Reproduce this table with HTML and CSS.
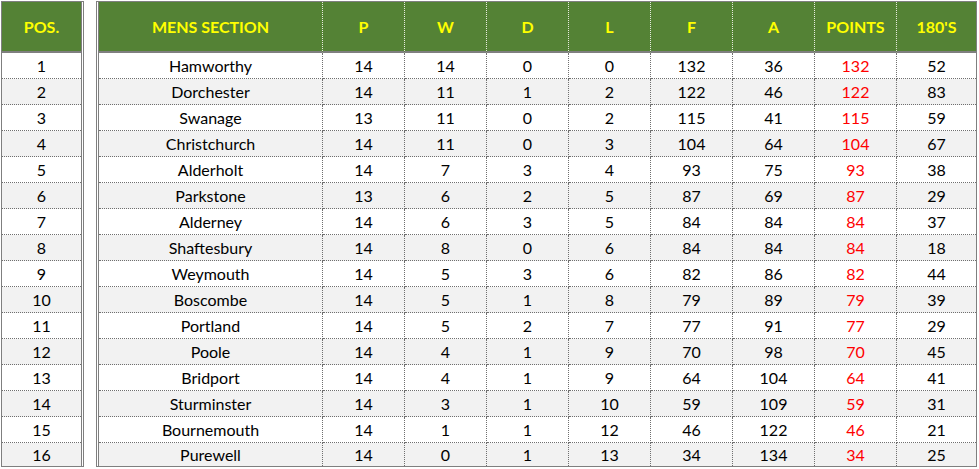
FILE: index.html
```html
<!DOCTYPE html>
<html lang="en">
<head>
<meta charset="utf-8">
<title>Mens Section League Table</title>
<link rel="stylesheet" href="styles.css">
</head>
<body>
<div class="sheet">
  <table class="tbl pos-tbl">
    <thead>
      <tr><th class="c-pos">POS.</th></tr>
    </thead>
    <tbody>
      <tr><td>1</td></tr>
      <tr><td>2</td></tr>
      <tr><td>3</td></tr>
      <tr><td>4</td></tr>
      <tr><td>5</td></tr>
      <tr><td>6</td></tr>
      <tr><td>7</td></tr>
      <tr><td>8</td></tr>
      <tr><td>9</td></tr>
      <tr><td>10</td></tr>
      <tr><td>11</td></tr>
      <tr><td>12</td></tr>
      <tr><td>13</td></tr>
      <tr><td>14</td></tr>
      <tr><td>15</td></tr>
      <tr><td>16</td></tr>
    </tbody>
  </table>
  <table class="tbl main-tbl">
    <thead>
      <tr>
        <th class="c-team">MENS SECTION</th>
        <th class="c-num">P</th>
        <th class="c-num">W</th>
        <th class="c-num">D</th>
        <th class="c-num">L</th>
        <th class="c-num">F</th>
        <th class="c-num">A</th>
        <th class="c-num">POINTS</th>
        <th class="c-last">180'S</th>
      </tr>
    </thead>
    <tbody>
      <tr><td>Hamworthy</td><td>14</td><td>14</td><td>0</td><td>0</td><td>132</td><td>36</td><td class="pts">132</td><td>52</td></tr>
      <tr><td>Dorchester</td><td>14</td><td>11</td><td>1</td><td>2</td><td>122</td><td>46</td><td class="pts">122</td><td>83</td></tr>
      <tr><td>Swanage</td><td>13</td><td>11</td><td>0</td><td>2</td><td>115</td><td>41</td><td class="pts">115</td><td>59</td></tr>
      <tr><td>Christchurch</td><td>14</td><td>11</td><td>0</td><td>3</td><td>104</td><td>64</td><td class="pts">104</td><td>67</td></tr>
      <tr><td>Alderholt</td><td>14</td><td>7</td><td>3</td><td>4</td><td>93</td><td>75</td><td class="pts">93</td><td>38</td></tr>
      <tr><td>Parkstone</td><td>13</td><td>6</td><td>2</td><td>5</td><td>87</td><td>69</td><td class="pts">87</td><td>29</td></tr>
      <tr><td>Alderney</td><td>14</td><td>6</td><td>3</td><td>5</td><td>84</td><td>84</td><td class="pts">84</td><td>37</td></tr>
      <tr><td>Shaftesbury</td><td>14</td><td>8</td><td>0</td><td>6</td><td>84</td><td>84</td><td class="pts">84</td><td>18</td></tr>
      <tr><td>Weymouth</td><td>14</td><td>5</td><td>3</td><td>6</td><td>82</td><td>86</td><td class="pts">82</td><td>44</td></tr>
      <tr><td>Boscombe</td><td>14</td><td>5</td><td>1</td><td>8</td><td>79</td><td>89</td><td class="pts">79</td><td>39</td></tr>
      <tr><td>Portland</td><td>14</td><td>5</td><td>2</td><td>7</td><td>77</td><td>91</td><td class="pts">77</td><td>29</td></tr>
      <tr><td>Poole</td><td>14</td><td>4</td><td>1</td><td>9</td><td>70</td><td>98</td><td class="pts">70</td><td>45</td></tr>
      <tr><td>Bridport</td><td>14</td><td>4</td><td>1</td><td>9</td><td>64</td><td>104</td><td class="pts">64</td><td>41</td></tr>
      <tr><td>Sturminster</td><td>14</td><td>3</td><td>1</td><td>10</td><td>59</td><td>109</td><td class="pts">59</td><td>31</td></tr>
      <tr><td>Bournemouth</td><td>14</td><td>1</td><td>1</td><td>12</td><td>46</td><td>122</td><td class="pts">46</td><td>21</td></tr>
      <tr><td>Purewell</td><td>14</td><td>0</td><td>1</td><td>13</td><td>34</td><td>134</td><td class="pts">34</td><td>25</td></tr>
    </tbody>
  </table>
</div>
</body>
</html>
```

FILE: styles.css
```css
html, body {
  margin: 0;
  padding: 0;
  background: #ffffff;
}

body {
  font-family: "Lato", "Open Sans", "Liberation Sans", sans-serif;
  font-size: 16px;
  color: #000000;
}

.sheet {
  display: flex;
  align-items: flex-start;
  gap: 12px;
  padding: 1px 0 0 1px;
}

.tbl {
  border-collapse: separate;
  border-spacing: 0;
  table-layout: fixed;
  border-top: 1px solid #7f7f7f;
  border-bottom: 1px solid #7f7f7f;
}

.pos-tbl {
  width: 83px;
  border-left: 1px solid #7f7f7f;
  border-right: 3px double #7f7f7f;
}

.main-tbl {
  width: 881px;
  border-left: 3px double #7f7f7f;
  border-right: 1px solid #7f7f7f;
}

.tbl th,
.tbl td {
  padding: 0;
  text-align: center;
  white-space: nowrap;
  overflow: hidden;
}

.tbl th {
  height: 49px;
  background: #548235;
  color: #ffff00;
  font-weight: 700;
  font-size: 16px;
  line-height: 18px;
  border-bottom: 2px solid #7f7f7f;
  border-right: 1px dotted #e8ecdf;
}

.tbl th.c-pos,
.tbl th.c-last {
  border-right: none;
}

.c-pos { width: 79px; }
.c-team { width: 223px; }
.c-num { width: 81px; }
.c-last { width: 79px; }

.tbl td {
  height: 25px;
  border-bottom: 1px dotted #6f6f6f;
  border-right: 1px dotted #6f6f6f;
}

.tbl td:last-child {
  border-right: none;
}

.tbl tbody tr:nth-child(even) td {
  background: #f2f2f2;
}

.tbl tbody tr:last-child td {
  height: 23px;
  border-bottom: none;
}

.tbl td.pts {
  color: #ff0000;
}
```
